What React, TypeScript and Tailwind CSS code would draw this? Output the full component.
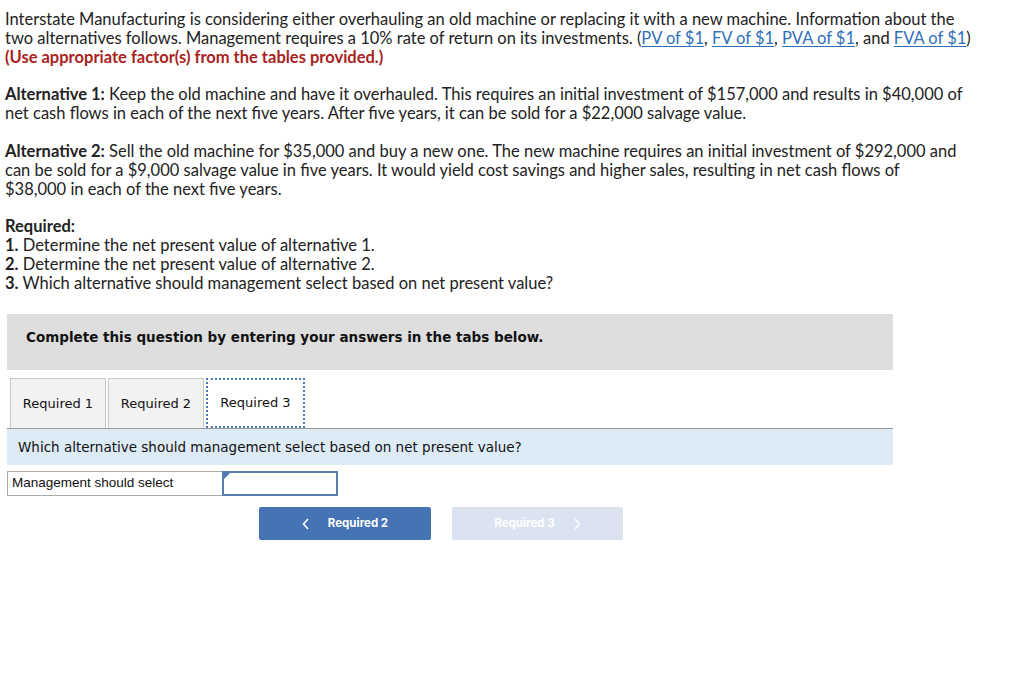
import React from "react";

const Link = ({ children }: { children: React.ReactNode }) => (
  <span className="text-[#2f6fba] underline underline-offset-2">{children}</span>
);

export default function App() {
  return (
    <div className="min-h-[687px] w-[1024px] bg-white">
      <div className="px-[5px] pt-[10px] font-['Lato',sans-serif] text-[16.5px] leading-[19px] text-[#222]">
        <p>
          Interstate Manufacturing is considering either overhauling an old machine or replacing it with a new machine. Information about the
          <br />
          two alternatives follows. Management requires a 10% rate of return on its investments. (<Link>PV of $1</Link>, <Link>FV of $1</Link>,{" "}
          <Link>PVA of $1</Link>, and <Link>FVA of $1</Link>)
          <br />
          <span className="font-bold text-[#a8231d]">(Use appropriate factor(s) from the tables provided.)</span>
        </p>
        <p className="mt-[18px]">
          <b>Alternative 1:</b> Keep the old machine and have it overhauled. This requires an initial investment of $157,000 and results in $40,000 of
          <br />
          net cash flows in each of the next five years. After five years, it can be sold for a $22,000 salvage value.
        </p>
        <p className="mt-[19px]">
          <b>Alternative 2:</b> Sell the old machine for $35,000 and buy a new one. The new machine requires an initial investment of $292,000 and
          <br />
          can be sold for a $9,000 salvage value in five years. It would yield cost savings and higher sales, resulting in net cash flows of
          <br />
          $38,000 in each of the next five years.
        </p>
        <div className="mt-[18px]">
          <p className="font-bold">Required:</p>
          <p>
            <b>1.</b> Determine the net present value of alternative 1.
          </p>
          <p>
            <b>2.</b> Determine the net present value of alternative 2.
          </p>
          <p>
            <b>3.</b> Which alternative should management select based on net present value?
          </p>
        </div>
      </div>

      <div className="ml-[7px] mt-[21px] w-[886px] font-['DejaVu_Sans',Verdana,sans-serif] text-[13.5px] text-[#111]">
        <div className="h-[56px] bg-[#dedede] pl-[19px] pt-[14px] leading-[18px]">
          <span className="font-bold">Complete this question by entering your answers in the tabs below.</span>
        </div>

        <div className="mt-[8px] flex h-[50px] items-end pl-[3px] text-[13px]">
          <div className="flex h-[50px] w-[96px] items-center justify-center border border-b-0 border-[#c8c8c8] bg-[#f2f2f2]">
            Required 1
          </div>
          <div className="ml-[2px] flex h-[50px] w-[96px] items-center justify-center border border-b-0 border-[#c8c8c8] bg-[#f2f2f2]">
            Required 2
          </div>
          <div className="ml-[2px] flex h-[50px] w-[99px] items-center justify-center border-2 border-dotted border-[#4a78b8] bg-white">
            Required 3
          </div>
        </div>

        <div className="flex h-[37px] items-center border-t border-[#999] bg-[#ddebf7] pl-[11px]">
          Which alternative should management select based on net present value?
        </div>

        <div className="mt-[6px] flex h-[25px] w-[331px] font-['Liberation_Sans',Arial,sans-serif] text-[13.5px]">
          <div className="flex w-[215px] items-center border border-r-0 border-[#aaa] pl-[4px]">Management should select</div>
          <div className="relative w-[116px] border-2 border-[#5a7db0]">
            <div className="absolute left-0 top-0 h-0 w-0 border-l-[6px] border-b-[6px] border-l-[#4a78b8] border-b-transparent" />
          </div>
        </div>

        <div className="mt-[11px] flex gap-[21px] pl-[252px] font-['Inter',sans-serif] text-[11.5px] font-bold text-white">
          <div className="flex h-[33px] w-[172px] items-center justify-center gap-[18px] rounded-[2px] bg-[#4673b3]">
            <svg width="8" height="12" viewBox="0 0 8 12" fill="none" stroke="white" strokeWidth="1.6">
              <path d="M6 1 L1.5 6 L6 11" />
            </svg>
            <span>Required 2</span>
          </div>
          <div className="flex h-[33px] w-[171px] items-center justify-center gap-[18px] rounded-[2px] bg-[#dae3ef]">
            <span>Required 3</span>
            <svg width="8" height="12" viewBox="0 0 8 12" fill="none" stroke="white" strokeWidth="1.6">
              <path d="M2 1 L6.5 6 L2 11" />
            </svg>
          </div>
        </div>
      </div>
    </div>
  );
}
